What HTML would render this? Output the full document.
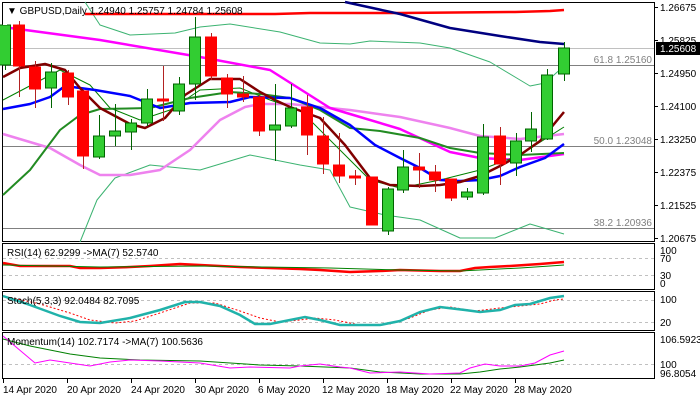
<!DOCTYPE html><html><head><style>body{margin:0;background:#fff}svg{display:block}text{font-family:"Liberation Sans",sans-serif;font-size:10px}</style></head><body>
<svg width="700" height="400" viewBox="0 0 700 400" xmlns="http://www.w3.org/2000/svg">
<rect width="700" height="400" fill="#fff"/>
<g fill="none" stroke="#000" stroke-width="1">
<rect x="2.5" y="2.5" width="652" height="239"/>
<rect x="2.5" y="243.5" width="652" height="46"/>
<rect x="2.5" y="291.5" width="652" height="39"/>
<rect x="2.5" y="332.5" width="652" height="46"/>
</g>
<line x1="3" y1="48.5" x2="654" y2="48.5" stroke="#c0c0c0"/>
<line x1="3" y1="65.5" x2="654" y2="65.5" stroke="#808080"/>
<line x1="3" y1="146.5" x2="654" y2="146.5" stroke="#808080"/>
<line x1="3" y1="228.5" x2="654" y2="228.5" stroke="#808080"/>
<g fill="#808080" text-anchor="end"><text x="652" y="63">61.8 1.25160</text><text x="652" y="144">50.0 1.23048</text><text x="652" y="226">38.2 1.20936</text></g>
<g fill="none" stroke-linejoin="round">
<polyline stroke="#3cb371" stroke-width="1" points="85,2 100,25 130,35 175,33 200,27 230,24 280,32 320,43 350,44 370,41 420,43 450,48 490,62 520,80 530,86 545,83 564,66"/>
<polyline stroke="#3cb371" stroke-width="1" points="80,242 97,200 115,178 150,165 200,170 250,155 300,165 330,170 350,207 385,215 420,220 460,238 495,238 530,224 564,234"/>
<polyline stroke="#ee82ee" stroke-width="2.5" points="3,134 50,148 80,165 100,175 130,175 160,170 190,150 220,120 245,107 260,104 290,104 330,108 350,110 400,117 450,128 480,136 520,139 564,134"/>
<polyline stroke="#ff00ff" stroke-width="2.5" points="3,27 100,40 200,57 270,70 330,108 350,114 400,129 450,152 480,158 520,160 564,154"/>
<polyline stroke="#008000" stroke-width="1" points="3,100 60,70 90,85 110,108 140,120 170,110 200,90 240,88 270,100 300,110 340,150 370,180 400,188 440,180 480,170 520,155 564,127"/>
<polyline stroke="#228b22" stroke-width="2" points="3,195 30,170 60,130 80,115 100,109 150,108 190,98 230,92 260,94 290,98 320,110 350,128 380,131 420,138 450,148 480,153 520,155 564,153"/>
<polyline stroke="#0000ff" stroke-width="2.5" points="3,109 30,104 50,97 65,86 95,90 130,96 160,108 190,103 230,102 250,97 290,98 320,108 350,125 375,145 400,158 420,168 440,180 460,181 480,180 500,176 520,167 545,158 564,144"/>
<polyline stroke="#800000" stroke-width="2.5" points="3,77 20,68 45,64 65,70 80,88 100,108 130,124 145,128 165,118 185,95 210,79 240,79 260,92 275,100 290,107 320,118 345,145 370,178 390,185 420,186 440,185 460,182 480,176 500,166 520,155 540,141 564,112"/>
<polyline stroke="#ff0000" stroke-width="2.5" points="85,14 275,14 310,13 400,13 515,12 550,11 564,10"/>
<polyline stroke="#000080" stroke-width="2.5" points="345,2 400,14 450,28 500,36 540,42 564,44"/>
</g>
<g stroke-width="1">
<line x1="5.5" y1="17" x2="5.5" y2="70" stroke="#006400"/><rect x="-0.5" y="25" width="11" height="40" fill="#32cd32" stroke="#006400"/>
<line x1="19.5" y1="21" x2="19.5" y2="97" stroke="#b22222"/><rect x="13.5" y="25" width="11" height="41" fill="#f00" stroke="#f00"/>
<line x1="35.5" y1="61" x2="35.5" y2="108" stroke="#b22222"/><rect x="29.5" y="67" width="11" height="22" fill="#f00" stroke="#f00"/>
<line x1="51.5" y1="63" x2="51.5" y2="108" stroke="#006400"/><rect x="45.5" y="72" width="11" height="16" fill="#32cd32" stroke="#006400"/>
<line x1="68.5" y1="70" x2="68.5" y2="105" stroke="#b22222"/><rect x="62.5" y="73" width="11" height="24" fill="#f00" stroke="#f00"/>
<line x1="83.5" y1="91" x2="83.5" y2="169" stroke="#b22222"/><rect x="77.5" y="91" width="11" height="65" fill="#f00" stroke="#f00"/>
<line x1="99.5" y1="115" x2="99.5" y2="159" stroke="#006400"/><rect x="93.5" y="136" width="11" height="21" fill="#32cd32" stroke="#006400"/>
<line x1="115.5" y1="104" x2="115.5" y2="146" stroke="#006400"/><rect x="109.5" y="131" width="11" height="5" fill="#32cd32" stroke="#006400"/>
<line x1="131.5" y1="119" x2="131.5" y2="150" stroke="#006400"/><rect x="125.5" y="123" width="11" height="9" fill="#32cd32" stroke="#006400"/>
<line x1="147.5" y1="89" x2="147.5" y2="126" stroke="#006400"/><rect x="141.5" y="99" width="11" height="24" fill="#32cd32" stroke="#006400"/>
<line x1="163.5" y1="66" x2="163.5" y2="121" stroke="#b22222"/><rect x="157.5" y="99" width="11" height="2" fill="#f00" stroke="#f00"/>
<line x1="179.5" y1="77" x2="179.5" y2="115" stroke="#006400"/><rect x="173.5" y="84" width="11" height="27" fill="#32cd32" stroke="#006400"/>
<line x1="195.5" y1="17" x2="195.5" y2="100" stroke="#006400"/><rect x="189.5" y="37" width="11" height="47" fill="#32cd32" stroke="#006400"/>
<line x1="211.5" y1="33" x2="211.5" y2="80" stroke="#b22222"/><rect x="205.5" y="37" width="11" height="39" fill="#f00" stroke="#f00"/>
<line x1="227.5" y1="74" x2="227.5" y2="108" stroke="#b22222"/><rect x="221.5" y="78" width="11" height="16" fill="#f00" stroke="#f00"/>
<line x1="243.5" y1="76" x2="243.5" y2="102" stroke="#b22222"/><rect x="237.5" y="94" width="11" height="3" fill="#f00" stroke="#f00"/>
<line x1="259.5" y1="95" x2="259.5" y2="136" stroke="#b22222"/><rect x="253.5" y="97" width="11" height="34" fill="#f00" stroke="#f00"/>
<line x1="275.5" y1="84" x2="275.5" y2="161" stroke="#006400"/><rect x="269.5" y="125" width="11" height="5" fill="#32cd32" stroke="#006400"/>
<line x1="291.5" y1="84" x2="291.5" y2="128" stroke="#006400"/><rect x="285.5" y="108" width="11" height="18" fill="#32cd32" stroke="#006400"/>
<line x1="307.5" y1="95" x2="307.5" y2="155" stroke="#b22222"/><rect x="301.5" y="107" width="11" height="28" fill="#f00" stroke="#f00"/>
<line x1="323.5" y1="117" x2="323.5" y2="174" stroke="#b22222"/><rect x="317.5" y="136" width="11" height="28" fill="#f00" stroke="#f00"/>
<line x1="339.5" y1="133" x2="339.5" y2="183" stroke="#b22222"/><rect x="333.5" y="165" width="11" height="11" fill="#f00" stroke="#f00"/>
<line x1="355.5" y1="170" x2="355.5" y2="185" stroke="#b22222"/><rect x="349.5" y="176" width="11" height="2" fill="#f00" stroke="#f00"/>
<line x1="372.5" y1="177" x2="372.5" y2="225" stroke="#b22222"/><rect x="366.5" y="177" width="11" height="48" fill="#f00" stroke="#f00"/>
<line x1="388.5" y1="187" x2="388.5" y2="235" stroke="#006400"/><rect x="382.5" y="189" width="11" height="42" fill="#32cd32" stroke="#006400"/>
<line x1="403.5" y1="150" x2="403.5" y2="193" stroke="#006400"/><rect x="397.5" y="167" width="11" height="23" fill="#32cd32" stroke="#006400"/>
<line x1="419.5" y1="153" x2="419.5" y2="188" stroke="#b22222"/><rect x="413.5" y="167" width="11" height="3" fill="#f00" stroke="#f00"/>
<line x1="435.5" y1="165" x2="435.5" y2="192" stroke="#b22222"/><rect x="429.5" y="172" width="11" height="8" fill="#f00" stroke="#f00"/>
<line x1="451.5" y1="179" x2="451.5" y2="201" stroke="#b22222"/><rect x="445.5" y="179" width="11" height="19" fill="#f00" stroke="#f00"/>
<line x1="467.5" y1="188" x2="467.5" y2="200" stroke="#006400"/><rect x="461.5" y="192" width="11" height="5" fill="#32cd32" stroke="#006400"/>
<line x1="483.5" y1="124" x2="483.5" y2="195" stroke="#006400"/><rect x="477.5" y="137" width="11" height="56" fill="#32cd32" stroke="#006400"/>
<line x1="500.5" y1="127" x2="500.5" y2="185" stroke="#b22222"/><rect x="494.5" y="136" width="11" height="28" fill="#f00" stroke="#f00"/>
<line x1="516.5" y1="133" x2="516.5" y2="176" stroke="#006400"/><rect x="510.5" y="141" width="11" height="22" fill="#32cd32" stroke="#006400"/>
<line x1="531.5" y1="112" x2="531.5" y2="152" stroke="#006400"/><rect x="525.5" y="129" width="11" height="12" fill="#32cd32" stroke="#006400"/>
<line x1="547.5" y1="69" x2="547.5" y2="140" stroke="#006400"/><rect x="541.5" y="75" width="11" height="64" fill="#32cd32" stroke="#006400"/>
<line x1="564.5" y1="42" x2="564.5" y2="81" stroke="#006400"/><rect x="558.5" y="48" width="11" height="26" fill="#32cd32" stroke="#006400"/>
</g>
<rect x="3" y="3" width="4" height="22" fill="#fff"/>
<text x="7" y="14" fill="#000">▼ GBPUSD,Daily  1.24940 1.25757 1.24784 1.25608</text>
<g stroke="#c0c0c0" stroke-dasharray="3,3"><line x1="3" y1="258.5" x2="654" y2="258.5"/><line x1="3" y1="275.5" x2="654" y2="275.5"/><line x1="3" y1="300.5" x2="654" y2="300.5"/><line x1="3" y1="322.5" x2="654" y2="322.5"/><line x1="3" y1="364.5" x2="654" y2="364.5"/></g>
<g fill="none">
<polyline stroke="#ff0000" stroke-width="2.5" points="3,263 20,266 70,266 80,268 100,268 130,267 150,266 180,264 200,265 240,267 300,269 320,270 350,272 380,271 400,270 440,271 460,271 475,268 490,267 510,266 540,264 564,262"/>
<polyline stroke="#008000" stroke-width="1" points="3,265 100,267 200,266 330,268 400,270 460,271 520,268 550,266 564,265"/>
<polyline stroke="#ff0000" stroke-width="1" stroke-dasharray="2,2" points="3,296 40,304 70,313 90,320 115,323 135,321 160,313 190,303 215,303 240,311 260,318 280,322 300,320 315,318 335,320 360,325 390,324 410,318 430,310 450,307 475,311 500,308 520,306 540,304 555,300 564,299"/>
<polyline stroke="#20b2aa" stroke-width="2.5" points="3,296 30,305 60,316 80,322 100,323 130,318 160,310 185,302 200,302 220,306 240,315 255,324 270,324 290,320 305,317 320,320 340,325 380,325 400,321 420,312 440,307 465,310 480,312 500,310 515,305 530,304 550,298 564,296"/>
<polyline stroke="#008000" stroke-width="1" points="3,339 30,346 70,354 100,358 140,360 200,361 260,365 300,366 350,368 380,372 420,374 460,374 480,372 500,369 520,367 550,363 564,360"/>
<polyline stroke="#ff00ff" stroke-width="1" points="3,336 35,363 50,360 70,363 90,366 110,362 130,360 160,361 200,363 230,368 250,367 290,368 300,366 320,364 340,367 350,368 370,373 400,372 430,374 460,373 470,368 485,364 500,366 520,366 535,363 550,355 564,351"/>
</g>
<g fill="#000"><text x="7" y="256">RSI(14) 62.9299  -&gt;MA(7) 52.5740</text><text x="7" y="304">Stoch(5,3,3) 92.0484 82.7095</text><text x="7" y="345">Momentum(14) 102.7174  -&gt;MA(7) 100.5636</text></g>
<g fill="#000"><text x="660" y="11">1.26675</text><text x="660" y="44">1.25825</text><text x="660" y="77">1.24950</text><text x="660" y="110">1.24100</text><text x="660" y="143">1.23250</text><text x="660" y="176">1.22375</text><text x="660" y="209">1.21525</text><text x="660" y="242">1.20675</text>
<text x="660" y="254">100</text><text x="660" y="262">70</text><text x="660" y="279">30</text><text x="660" y="287">0</text>
<text x="660" y="303">100</text><text x="660" y="326">20</text>
<text x="660" y="343">106.5923</text><text x="660" y="368">100</text><text x="660" y="377">96.8054</text></g>
<rect x="656" y="42" width="44" height="13" fill="#000"/><text x="660" y="52" fill="#fff">1.25608</text>
<g stroke="#000"><line x1="655" y1="7.5" x2="658" y2="7.5"/><line x1="655" y1="40.5" x2="658" y2="40.5"/><line x1="655" y1="73.5" x2="658" y2="73.5"/><line x1="655" y1="106.5" x2="658" y2="106.5"/><line x1="655" y1="139.5" x2="658" y2="139.5"/><line x1="655" y1="172.5" x2="658" y2="172.5"/><line x1="655" y1="205.5" x2="658" y2="205.5"/><line x1="655" y1="238.5" x2="658" y2="238.5"/></g>
<g stroke="#000"><line x1="3.5" y1="379" x2="3.5" y2="383"/><line x1="67.5" y1="379" x2="67.5" y2="383"/><line x1="131.5" y1="379" x2="131.5" y2="383"/><line x1="195.5" y1="379" x2="195.5" y2="383"/><line x1="259.5" y1="379" x2="259.5" y2="383"/><line x1="323.5" y1="379" x2="323.5" y2="383"/><line x1="387.5" y1="379" x2="387.5" y2="383"/><line x1="451.5" y1="379" x2="451.5" y2="383"/><line x1="515.5" y1="379" x2="515.5" y2="383"/></g>
<g fill="#000"><text x="3" y="393">14 Apr 2020</text><text x="67" y="393">20 Apr 2020</text><text x="131" y="393">24 Apr 2020</text><text x="195" y="393">30 Apr 2020</text><text x="258" y="393">6 May 2020</text><text x="322" y="393">12 May 2020</text><text x="386" y="393">18 May 2020</text><text x="450" y="393">22 May 2020</text><text x="514" y="393">28 May 2020</text></g>
</svg></body></html>
